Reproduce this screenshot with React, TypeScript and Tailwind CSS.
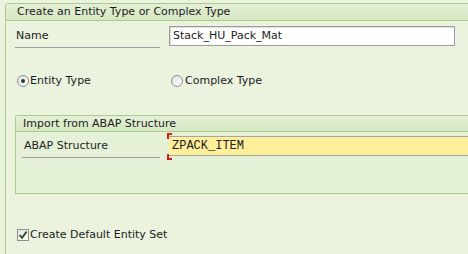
const font = { fontFamily: '"DejaVu Sans", Verdana, sans-serif' };

function Radio({ checked }: { checked?: boolean }) {
  return (
    <span className="flex h-[12px] w-[12px] shrink-0 items-center justify-center rounded-full border border-[#8d8d8d] bg-gradient-to-br from-[#e2e2e2] to-white">
      {checked && <span className="h-[4px] w-[4px] rounded-full bg-[#2d3b2a]" />}
    </span>
  );
}

export default function App() {
  return (
    <div
      className="h-[254px] w-[468px] overflow-hidden bg-[#ebf3df] pl-[5px] pt-[3px] text-[11px] text-[#1c1c1c]"
      style={font}
    >
      <div className="h-full rounded-tl-[3px] border-l border-t border-[#a9cc8c]">
        {/* Header */}
        <div className="h-[17px] border-b border-[#a9cc8c] bg-gradient-to-b from-[#e4f0d6] to-[#d6e8c2] pl-[11px] leading-[16px]">
          Create an Entity Type or Complex Type
        </div>

        {/* Name row */}
        <div className="mt-[5px] flex items-start">
          <div className="ml-[9px] h-[22px] w-[145px] shrink-0 border-b border-[#a0a0a0] pl-[1px] leading-[20px]">Name</div>
          <div className="ml-[9px] h-[20px] w-[286px] shrink-0 border border-[#9c9c9c] bg-white pl-[3px] leading-[18px] shadow-[inset_1px_1px_0_#e0e0e0]">
            Stack_HU_Pack_Mat
          </div>
        </div>

        {/* Radios */}
        <div className="mt-[26px] flex h-[14px] items-center">
          <div className="ml-[11px] flex w-[154px] shrink-0 items-center gap-[1px]">
            <Radio checked />
            <span>Entity Type</span>
          </div>
          <div className="flex items-center gap-[2px]">
            <Radio />
            <span>Complex Type</span>
          </div>
        </div>

        {/* Inner panel */}
        <div className="ml-[9px] mt-[27px] h-[79px] rounded-tl-[3px] border-b border-l border-t border-[#a9cc8c] bg-[#e4f1d6]">
          <div className="h-[16px] border-b border-[#a9cc8c] bg-gradient-to-b from-[#e4f0d6] to-[#d6e8c2] pl-[7px] leading-[15px]">
            Import from ABAP Structure
          </div>
          <div className="mt-[4px] flex items-start">
            <div className="ml-[6px] h-[22px] w-[138px] shrink-0 border-b border-[#a0a0a0] pl-[2px] leading-[20px]">
              ABAP Structure
            </div>
            <div className="relative ml-[9px] h-[20px] w-[300px] shrink-0">
              <span className="absolute -left-[2px] -top-[3px] h-[6px] w-[5px] border-l-2 border-t-2 border-[#d81e1e]" />
              <span className="absolute -bottom-[4px] -left-[2px] h-[6px] w-[5px] border-b-2 border-l-2 border-[#d81e1e]" />
              <div
                className="h-[20px] border-b border-t border-[#a5a5a5] bg-[#ffee9a] pl-[3px] text-[12px] leading-[18px] text-[#222]"
                style={{ fontFamily: '"Liberation Mono", "Courier New", monospace' }}
              >
                ZPACK_ITEM
              </div>
            </div>
          </div>
        </div>

        {/* Checkbox */}
        <div className="ml-[11px] mt-[33px] flex items-center gap-[1px]">
          <span className="flex h-[12px] w-[12px] shrink-0 items-center justify-center border border-[#8d8d8d] bg-gradient-to-br from-[#e4e4e4] to-white">
            <svg width="10" height="10" viewBox="0 0 10 10">
              <path d="M1.5 5 L4 7.8 L8.6 1.6" fill="none" stroke="#264d1e" strokeWidth="1.8" />
            </svg>
          </span>
          <span>Create Default Entity Set</span>
        </div>
      </div>
    </div>
  );
}
